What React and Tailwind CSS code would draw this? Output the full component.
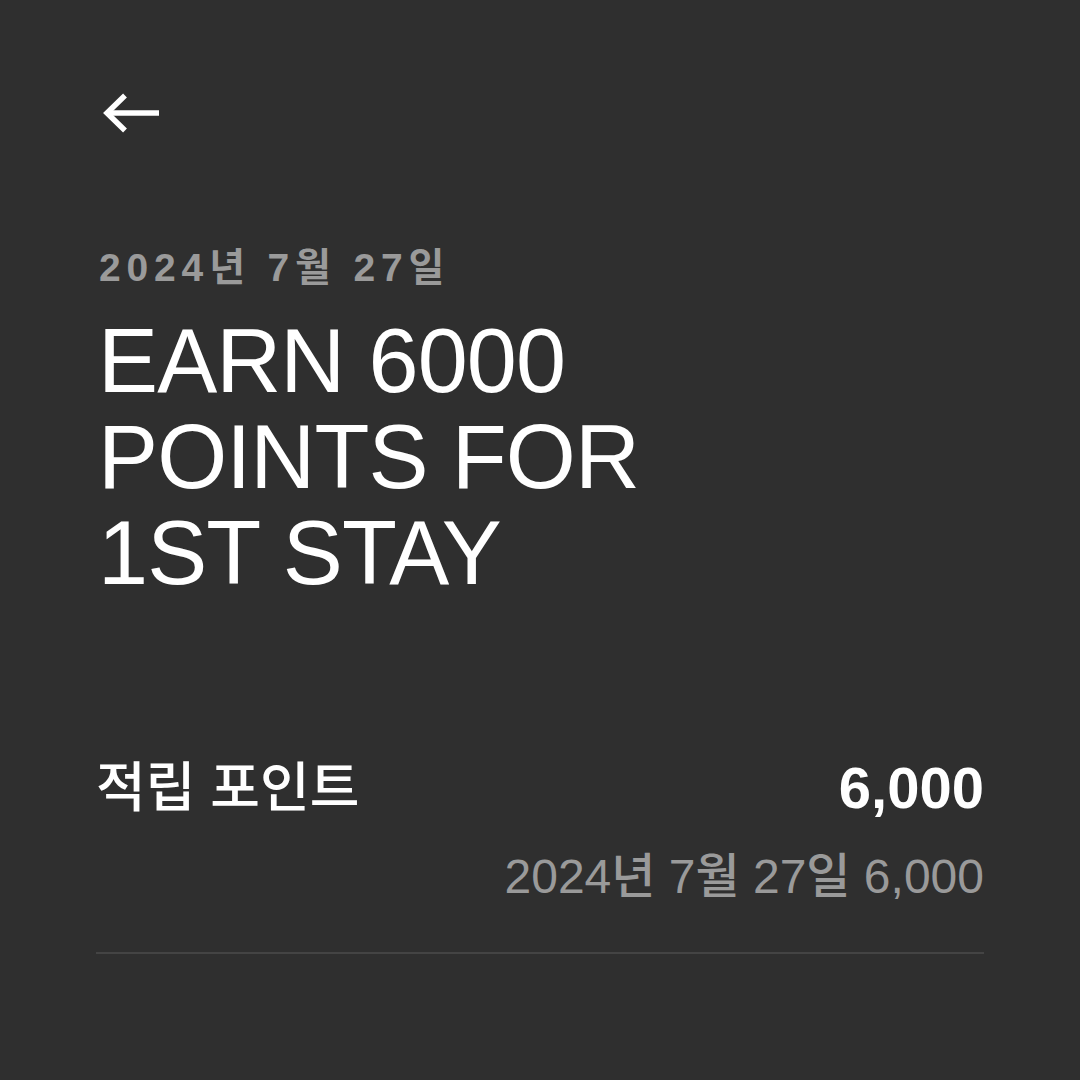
import React from 'react';

const font = { fontFamily: '"Liberation Sans", "Noto Sans CJK KR", sans-serif' };

export default function App() {
    return (
        <div className="w-[1080px] h-[1080px] bg-[#2f2f2f] text-white overflow-hidden" style={font}>
            <div className="px-[96px] pt-[93px]">
                {/* Back button */}
                <button className="block ml-[4px] h-[40px] w-[64px]">
                    <svg width="64" height="40" viewBox="0 0 64 40" fill="none" stroke="white" strokeWidth="5.5" strokeLinecap="butt" strokeLinejoin="miter">
                        <path d="M25 2.5 L7 20 L25 37.5" />
                        <path d="M8 20 H59" />
                    </svg>
                </button>

                {/* Header */}
                <div className="mt-[111px] pl-[3px] text-[39px] leading-[48px] tracking-[0.15em] font-bold text-[#9a9a9a]">
                    2024년 7월 27일
                </div>
                <h1 className="mt-[21px] pl-[2px] text-[90px] leading-[96px] tracking-[-0.01em] text-white">
                    EARN 6000<br />POINTS FOR<br />1ST STAY
                </h1>

                {/* Points row */}
                <div className="mt-[155px] flex items-end justify-between">
                    <span className="text-[54px] leading-[64px] font-medium text-white">적립 포인트</span>
                    <span className="text-[58px] leading-[64px] font-bold text-white">6,000</span>
                </div>
                <div className="mt-[29px] text-right text-[48px] leading-[56px] font-medium text-[#9a9a9a]">
                    2024년 7월 27일 6,000
                </div>

                <div className="mt-[47px] h-[2px] bg-[#444444]" />
            </div>
        </div>
    );
}
